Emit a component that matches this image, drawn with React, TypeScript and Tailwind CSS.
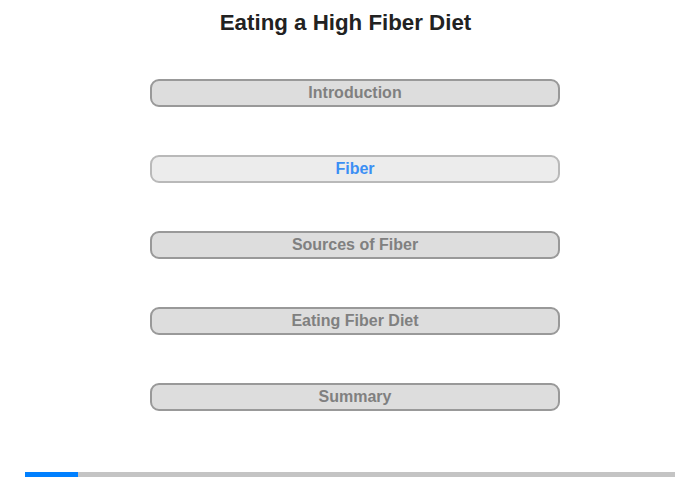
import React from "react";

const items = ["Introduction", "Fiber", "Sources of Fiber", "Eating Fiber Diet", "Summary"];

export default function App() {
  return (
    <div className="w-[700px] h-[480px] bg-white relative" style={{ fontFamily: '"Liberation Sans", Arial, sans-serif' }}>
      <div className="pt-[10px] w-[691px] text-center text-[22.3px] leading-[26px] font-bold text-[#222222]">
        Eating a High Fiber Diet
      </div>
      <div className="mt-[43px] flex flex-col gap-[48px] pl-[150px]">
        {items.map((t, i) => (
          <div
            key={t}
            className={
              i === 1
                ? "w-[410px] h-[28px] rounded-[9px] border-2 border-[#b9b9b9] bg-[#ececec] flex items-center justify-center text-[16px] font-bold text-[#3b8ff4]"
                : "w-[410px] h-[28px] rounded-[9px] border-2 border-[#999999] bg-[#dddddd] flex items-center justify-center text-[16px] font-bold text-[#808080]"
            }
          >
            {t}
          </div>
        ))}
      </div>
      <div className="absolute left-[25px] top-[472px] w-[650px] h-[5px] bg-[#c4c4c4] flex">
        <div className="w-[53px] h-full bg-[#0080ff]" />
      </div>
    </div>
  );
}
